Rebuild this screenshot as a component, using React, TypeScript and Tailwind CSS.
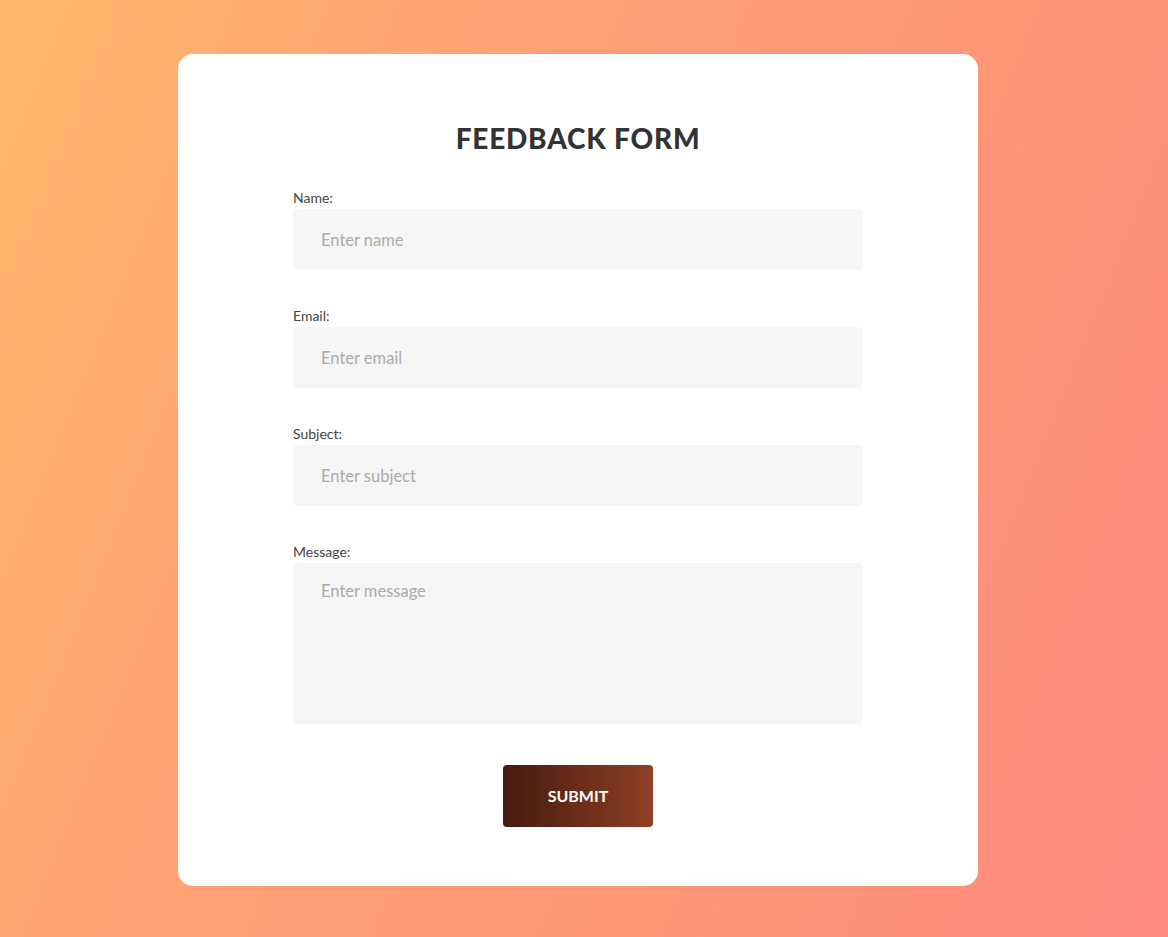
import React from "react";

const fields = [
  { label: "Name:", ph: "Enter name" },
  { label: "Email:", ph: "Enter email" },
  { label: "Subject:", ph: "Enter subject" },
];

export default function App() {
  return (
    <div
      className="min-h-[937px] w-full flex justify-center pt-[54px] pr-[12px] bg-[linear-gradient(112deg,#ffb86c_0%,#fea174_35%,#fe9478_70%,#fd8a7e_100%)]"
      style={{ fontFamily: "Lato, 'Open Sans', sans-serif" }}
    >
      <div className="w-[800px] h-[832px] bg-white rounded-[15px] pt-[67px] flex flex-col items-center">
        <h2 className="text-[28px] leading-[34px] font-black text-[#333] tracking-[0.8px]">FEEDBACK FORM</h2>
        <form className="w-[570px] mt-[33px] flex flex-col" onSubmit={(e) => e.preventDefault()}>
          {fields.map((f) => (
            <div key={f.label} className="flex flex-col mb-[36px]">
              <label className="text-[14px] leading-[20px] text-[#444]">{f.label}</label>
              <input
                placeholder={f.ph}
                className="mt-px h-[61px] w-full rounded-[5px] bg-[#f6f6f6] px-[28px] text-[16.5px] text-[#333] placeholder:text-[#aaa] outline-none"
              />
            </div>
          ))}
          <div className="flex flex-col">
            <label className="text-[14px] leading-[20px] text-[#444]">Message:</label>
            <textarea
              placeholder="Enter message"
              className="mt-px h-[161px] w-full resize-none rounded-[5px] bg-[#f6f6f6] px-[28px] pt-[17px] text-[16.5px] leading-[22px] text-[#333] placeholder:text-[#aaa] outline-none"
            />
          </div>
          <div className="flex justify-center mt-[41px]">
            <button
              type="submit"
              className="w-[150px] h-[62px] rounded-[4px] bg-[linear-gradient(90deg,#451a0d,#8f4024)] text-white text-[16px] font-bold"
            >
              SUBMIT
            </button>
          </div>
        </form>
      </div>
    </div>
  );
}
